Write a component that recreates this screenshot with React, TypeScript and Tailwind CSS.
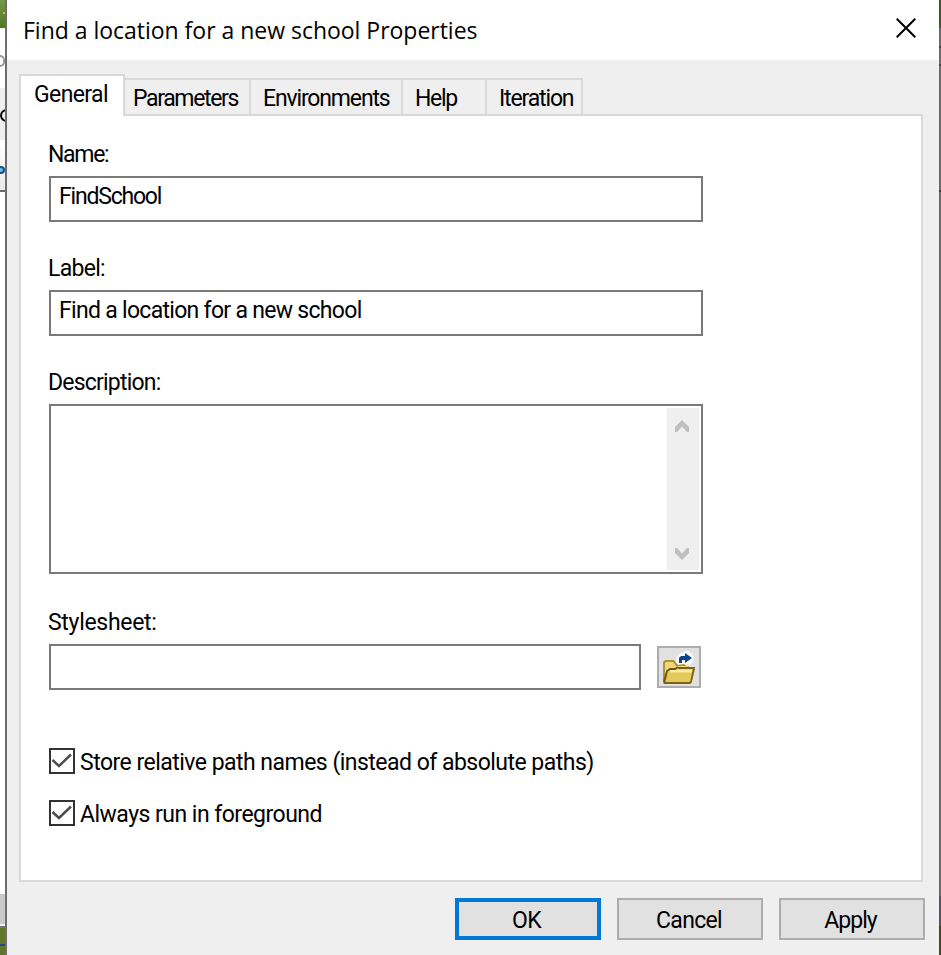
import type { ReactNode } from "react";

const control = "font-[Roboto,'Noto_Sans',sans-serif] text-[23px] leading-[28px] whitespace-pre text-black";

function Tab({ label, className }: { label: string; className: string }) {
  return (
    <div className={`h-[38px] border-2 border-l-0 border-[#d9d9d9] pt-[5px] ${className}`}>{label}</div>
  );
}

function Label({ children, className = "" }: { children: ReactNode; className?: string }) {
  return <div className={`-ml-px h-[28px] ${className}`}>{children}</div>;
}

function Check({ label, className }: { label: string; className: string }) {
  return (
    <div className="flex h-[26px] items-center">
      <span className="flex h-[26px] w-[26px] shrink-0 items-center justify-center border-2 border-[#333] bg-white">
        <svg width="22" height="22" viewBox="0 0 22 22" fill="none" stroke="#4d4d4d" strokeWidth="2.5">
          <path d="M1.5 10 L8 16 L20 4.5" />
        </svg>
      </span>
      <span className={`pt-[4px] ${className}`}>{label}</span>
    </div>
  );
}

function FolderIcon() {
  return (
    <svg width="34" height="34" viewBox="0 0 34 34">
      <path d="M1 33V12l2-2h9l3 4h12v5h6l-4 15H2z" fill="#b2942c" />
      <path d="M3 31V13l1-1h7l3 4h11v4H9L4 27z" fill="#ecd77b" />
      <path d="M3 33L7 20l3-1h22l-4 14z" fill="#e3c85a" />
      <path d="M8 21h22" fill="none" stroke="#f8e99c" strokeWidth="3" />
      <path d="M2 32L5 21l3-2h5l3-2" fill="none" stroke="#6f5714" strokeWidth="2" />
      <path d="M16 18h16l-3 14-2 1H2" fill="none" stroke="#7c6219" strokeWidth="1.8" />
      <path d="M15 7l3-4h3l1-2h5l5 6-2 6-4 4-4-3-6 1-2-3z" fill="#fff" opacity=".85" />
      <path d="M17 13V8l2-2h4V3l7 5-7 5v-3h-3v3z" fill="#07458e" />
    </svg>
  );
}

function LeftBackdrop() {
  return (
    <div className="flex h-full w-[7px] shrink-0 flex-col overflow-hidden border-r-2 border-[#6d6d6d] bg-white">
      <div className="h-[28px] shrink-0 bg-gradient-to-b from-[#78974a] to-[#4e7920] pt-[12px]">
        <div className="ml-[3px] h-[2px] w-[2px] bg-[#f5a623]" />
      </div>
      <div className="h-[60px] shrink-0 bg-white pt-[27px]">
        <div className="h-[12px] w-[5px] rounded-r-full border-2 border-l-0 border-[#999]" />
      </div>
      <div className="h-[52px] shrink-0 bg-[#efefef] pt-[21px]">
        <div className="h-[13px] w-[8px] rounded-l-full border-2 border-r-0 border-black" />
      </div>
      <div className="h-[50px] shrink-0 bg-gradient-to-b from-white to-[#e9e9e9] pt-[26px]">
        <div className="h-[8px] w-[5px] rounded-r border-2 border-l-0 border-[#155384] bg-[#79afd2]" />
      </div>
      <div className="h-[2px] shrink-0 bg-[#6d6d6d]" />
      <div className="h-[702px] shrink-0 bg-white" />
      <div className="h-[30px] shrink-0 bg-[#c9c9c9]" />
      <div className="h-[2px] shrink-0 bg-[#f1f1f1]" />
      <div className="h-[2px] shrink-0 bg-[#777]" />
      <div className="h-[16px] shrink-0 bg-[#60772a]" />
      <div className="h-[2px] shrink-0 bg-[#244882]" />
      <div className="grow bg-[#5d7628]" />
    </div>
  );
}

function RightBackdrop() {
  return (
    <div className="flex h-full w-[2px] shrink-0 flex-col bg-[#6b6c6e]">
      <div className="h-[28px] bg-[#41562b]" />
      <div className="h-[18px]" />
      <div className="h-[2px] bg-[#424347]" />
      <div className="h-[16px]" />
      <div className="h-[2px] bg-[#424347]" />
      <div className="h-[124px]" />
      <div className="h-[2px] bg-[#3c3c3e]" />
      <div className="grow" />
      <div className="h-[30px] bg-[#55565a]" />
      <div className="h-[29px] bg-[#3b4924]" />
    </div>
  );
}

export default function App() {
  return (
    <div className="flex h-[955px] w-[941px] overflow-hidden bg-[#efefef]">
      <LeftBackdrop />
      <div className="flex w-[932px] shrink-0 flex-col">
        <header className="flex h-[60px] shrink-0 items-center justify-between bg-white pl-[16px] pr-[23px]">
          <h1 className="font-['Open_Sans','Noto_Sans',sans-serif] text-[23px] leading-[32px] tracking-[-0.02px] whitespace-pre text-black">Find a location for a new school Properties</h1>
          <svg className="-mt-[4px]" width="20" height="20" viewBox="0 0 20 20" stroke="#000" strokeWidth="2">
            <path d="M.7.7l18.6 18.6M19.3.7L.7 19.3" />
          </svg>
        </header>
        <div className={`ml-[12px] flex w-[904px] flex-col pt-[14px] ${control}`}>
          <div className="z-10 flex h-[42px] items-end">
            <div className="h-[42px] w-[106px] shrink-0 border-2 border-b-0 border-[#d9d9d9] bg-white pl-[13px] pt-[5px] tracking-[-0.6px]">General</div>
            <Tab label="Parameters" className="w-[126px] pl-[8px] tracking-[-1.35px]" />
            <Tab label="Environments" className="w-[152px] pl-[12px] tracking-[-1.15px]" />
            <Tab label="Help" className="w-[84px] pl-[12px] tracking-[-1.3px]" />
            <Tab label="Iteration" className="w-[96px] pl-[12px] tracking-[-1.15px]" />
          </div>
          <main className="-mt-[2px] flex h-[768px] flex-col border-2 border-[#d9d9d9] bg-white pl-[28px] pt-[25px]">
            <Label className="tracking-[-1.3px]">Name:</Label>
            <div className="mt-[7px] h-[46px] w-[654px] border-2 border-[#7a7a7a] pl-[8px] pt-[5px] tracking-[-1.2px]">FindSchool</div>
            <Label className="mt-[33px] tracking-[-0.7px]">Label:</Label>
            <div className="mt-[7px] h-[46px] w-[654px] border-2 border-[#7a7a7a] pl-[8px] pt-[5px] tracking-[-0.7px]">Find a location for a new school</div>
            <Label className="mt-[33px] tracking-[-0.8px]">Description:</Label>
            <div className="mt-[7px] flex h-[170px] w-[654px] justify-end border-2 border-[#7a7a7a] p-[2px]">
              <div className="flex w-[32px] flex-col items-center justify-between bg-[#efefef] pb-[10px] pr-[2px] pt-[12px]">
                <svg width="14" height="12" viewBox="0 0 14 12"><path d="M0 7L7 0l7 7v5h-2L7 6.5 2 12H0z" fill="#bfbfbf" /></svg>
                <svg width="14" height="12" viewBox="0 0 14 12"><path d="M0 5L7 12l7-7V0h-2L7 5.5 2 0H0z" fill="#bfbfbf" /></svg>
              </div>
            </div>
            <Label className="mt-[35px] tracking-[-0.3px]">Stylesheet:</Label>
            <div className="mt-[7px] flex items-center gap-[16px]">
              <div className="h-[46px] w-[592px] border-2 border-[#7a7a7a]" />
              <div className="flex h-[42px] w-[44px] items-center justify-center border-2 border-[#adadad] bg-[#e1e1e1]"><FolderIcon /></div>
            </div>
            <div className="mt-[58px] flex flex-col gap-[26px]">
              <Check label="Store relative path names (instead of absolute paths)" className="ml-[5px] tracking-[-0.52px]" />
              <Check label="Always run in foreground" className="ml-[5px] tracking-[-0.52px]" />
            </div>
          </main>
        </div>
        <footer className={`mt-[16px] flex justify-end gap-[16px] pr-[14px] tracking-[-0.7px] ${control}`}>
          <div className="flex h-[42px] w-[146px] items-center justify-center border-4 border-[#0078d7] bg-[#e1e1e1] pr-[3px] pt-[3px]">OK</div>
          <div className="flex h-[42px] w-[146px] items-center justify-center border-2 border-[#adadad] bg-[#e1e1e1] pr-[2px] pt-[3px]">Cancel</div>
          <div className="flex h-[42px] w-[146px] items-center justify-center border-2 border-[#adadad] bg-[#e1e1e1] pr-[3px] pt-[3px] tracking-[-1px]">Apply</div>
        </footer>
      </div>
      <RightBackdrop />
    </div>
  );
}
